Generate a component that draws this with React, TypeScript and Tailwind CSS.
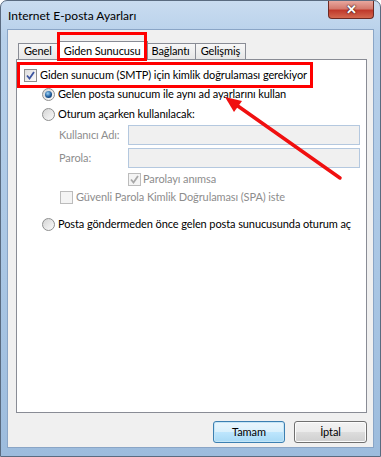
import React from "react"

const Checkbox = ({ checked, disabled }: { checked?: boolean; disabled?: boolean }) => (
  <span
    className={`w-[13px] h-[13px] shrink-0 border flex items-center justify-center ${
      disabled
        ? "border-[#bcbcbc] bg-[#f4f4f4]"
        : "border-[#8e8f8f] bg-[linear-gradient(135deg,#dcdcdc,#fdfdfd)]"
    }`}
  >
    {checked && (
      <svg width="9" height="9" viewBox="0 0 9 9">
        <path
          d="M1 4.5 L3.5 7.5 L8 1"
          fill="none"
          stroke={disabled ? "#a8a8a8" : "#3c55a0"}
          strokeWidth="1.8"
        />
      </svg>
    )}
  </span>
)

const Radio = ({ checked }: { checked?: boolean }) => (
  <span className="w-[13px] h-[13px] shrink-0 rounded-full border border-[#8e8f8f] bg-[linear-gradient(135deg,#d4d4d4,#fbfbfb)] flex items-center justify-center">
    {checked && (
      <span className="w-[7px] h-[7px] rounded-full bg-[radial-gradient(circle_at_40%_35%,#9bd3f7,#1d5a9a_55%,#0a2850)]" />
    )}
  </span>
)

const Tab = ({ label, selected }: { label: string; selected?: boolean }) =>
  selected ? (
    <div className="relative z-10 h-[19px] -mb-px -mx-px px-[6px] bg-white border border-b-0 border-[#898c95] flex items-center">
      {label}
    </div>
  ) : (
    <div className="h-[16px] px-[5px] bg-[linear-gradient(#f7f7f7,#e6e6e6)] border border-b-0 border-[#898c95] -ml-px first:ml-0 flex items-center">
      {label}
    </div>
  )

export default function App() {
  return (
    <div className="relative w-[381px] h-[457px] flex flex-col rounded-t-[7px] border border-[#5a6b80] bg-[linear-gradient(#c9dcf0,#b7d0ea_8%,#a9c6e4_60%,#9dbcdd)] overflow-hidden font-[Lato] text-[11px] tracking-[-0.1px] text-black">
      {/* Title bar */}
      <div className="h-[28px] shrink-0 flex items-start">
        <span className="ml-[7px] mt-[6px] text-[12px] tracking-normal">Internet E-posta Ayarları</span>
        <div className="ml-auto mr-[6px] w-[46px] h-[18px] rounded-b-[4px] border border-t-0 border-[#6d2a23] bg-[linear-gradient(#e8a79e,#d47a6e_45%,#c0392b_55%,#d3684f)] flex items-center justify-center">
          <span className="text-white font-bold text-[13px] leading-none [text-shadow:0_0_2px_#3a1410,0_0_1px_#3a1410]">
            ✕
          </span>
        </div>
      </div>

      {/* Body */}
      <div className="flex-1 mx-[6px] mb-[8px] border border-[#8aa5c6] bg-[#f0f0f0] flex flex-col">
        {/* Tabs */}
        <div className="mt-[10px] ml-[10px] h-[19px] flex items-end">
          <Tab label="Genel" />
          <Tab label="Giden Sunucusu" selected />
          <Tab label="Bağlantı" />
          <Tab label="Gelişmiş" />
        </div>

        {/* Panel */}
        <div className="ml-[8px] w-[351px] h-[354px] bg-white border border-[#898c95] flex flex-col">
          <div className="mt-[7px] ml-[7px] h-[16px] flex items-center gap-[3px]">
            <Checkbox checked />
            <span>Giden sunucum (SMTP) için kimlik doğrulaması gerekiyor</span>
          </div>
          <div className="mt-[3px] ml-[25px] h-[16px] flex items-center gap-[3px]">
            <Radio checked />
            <span>Gelen posta sunucum ile aynı ad ayarlarını kullan</span>
          </div>
          <div className="mt-[4px] ml-[25px] h-[16px] flex items-center gap-[3px]">
            <Radio />
            <span>Oturum açarken kullanılacak:</span>
          </div>
          <div className="mt-[3px] h-[20px] flex items-center text-[#8d8d8d]">
            <span className="ml-[42px] w-[69px]">Kullanıcı Adı:</span>
            <div className="w-[232px] h-[20px] border border-[#b4c8df] bg-[#f0f0f0]" />
          </div>
          <div className="mt-[3px] h-[20px] flex items-center text-[#8d8d8d]">
            <span className="ml-[42px] w-[69px]">Parola:</span>
            <div className="w-[232px] h-[20px] border border-[#b4c8df] bg-[#f0f0f0]" />
          </div>
          <div className="mt-[3px] ml-[111px] h-[16px] flex items-center gap-[2px] text-[#8d8d8d]">
            <Checkbox checked disabled />
            <span>Parolayı anımsa</span>
          </div>
          <div className="mt-[2px] ml-[43px] h-[16px] flex items-center gap-[3px] text-[#8d8d8d]">
            <Checkbox disabled />
            <span>Güvenli Parola Kimlik Doğrulaması (SPA) iste</span>
          </div>
          <div className="mt-[11px] ml-[25px] h-[16px] flex items-center gap-[3px]">
            <Radio />
            <span>Posta göndermeden önce gelen posta sunucusunda oturum aç</span>
          </div>
        </div>

        {/* Buttons */}
        <div className="mt-[8px] mr-[6px] flex justify-end gap-[9px]">
          <button className="w-[72px] h-[22px] rounded-[3px] border border-[#3c7fb1] bg-[linear-gradient(#eaf6fd,#d9f0fc_50%,#bee6fd_50%,#a7d9f5)] shadow-[inset_0_0_0_1px_#c4e5f6]">
            Tamam
          </button>
          <button className="w-[73px] h-[22px] rounded-[3px] border border-[#707070] bg-[linear-gradient(#f2f2f2,#ebebeb_50%,#dddddd_50%,#cfcfcf)] shadow-[inset_0_0_0_1px_#fcfcfc]">
            İptal
          </button>
        </div>
      </div>

      {/* Annotations */}
      <div className="absolute left-[56px] top-[31px] w-[90px] h-[29px] border-[3px] border-[#ff0000] z-20" />
      <div className="absolute left-[16px] top-[61px] w-[296px] h-[26px] border-[3px] border-[#ff0000] z-20" />
      <svg className="absolute left-0 top-0 z-30" width="381" height="457" viewBox="0 0 381 457">
        <line x1="339" y1="177" x2="234" y2="103" stroke="#f01010" strokeWidth="3.5" strokeLinecap="round" />
        <polygon points="224,96 241,100 233,111" fill="#f01010" />
      </svg>
    </div>
  )
}
